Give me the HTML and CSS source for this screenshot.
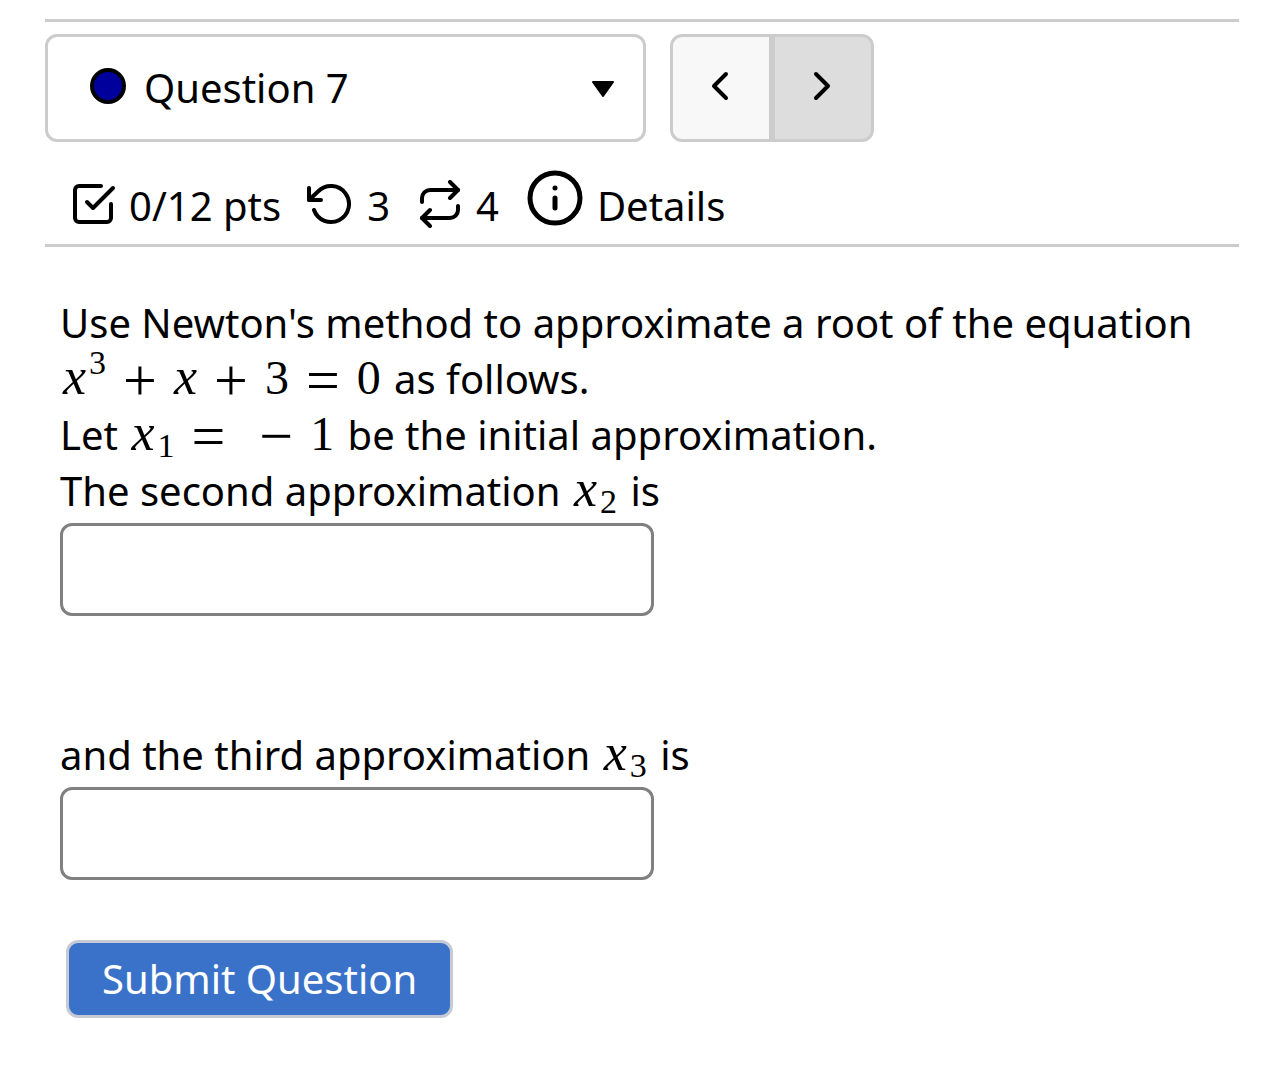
FILE: index.html
```
<!DOCTYPE html>
<html lang="en">
<head>
    <meta charset="UTF-8">
    <meta name="viewport" content="width=device-width, initial-scale=1.0">
    <title>Question 7</title>
    <link rel="stylesheet" href="styles.css">
</head>
<body>
    <main class="assessment">
        <header class="question-header">
            <div class="nav-row">
                <div class="question-select">
                    <svg class="status-dot" viewBox="0 0 36 36" aria-hidden="true"><circle cx="18" cy="18" r="16"/></svg>
                    <select aria-label="Question">
                        <option>Question 7</option>
                    </select>
                    <svg class="caret" viewBox="0 0 22 16" aria-hidden="true"><path d="M1 1h20L11 15z"/></svg>
                </div>
                <div class="pager">
                    <button type="button" class="prev" aria-label="Previous question">
                        <svg class="icon chevron" viewBox="0 0 24 24"><path d="M15 18l-6-6 6-6"/></svg>
                    </button>
                    <button type="button" class="next" aria-label="Next question">
                        <svg class="icon chevron" viewBox="0 0 24 24"><path d="M9 18l6-6-6-6"/></svg>
                    </button>
                </div>
            </div>
            <div class="info-row">
                <span class="info-item">
                    <svg class="icon" viewBox="0 0 24 24"><path d="M9 11l3 3L22 4"/><path d="M21 12v7a2 2 0 0 1-2 2H5a2 2 0 0 1-2-2V5a2 2 0 0 1 2-2h11"/></svg>
                    0/12 pts
                </span>
                <span class="info-item">
                    <svg class="icon" viewBox="0 0 24 24"><path d="M1 4v6h6"/><path d="M3.51 15a9 9 0 1 0 2.13-9.36L1 10"/></svg>
                    3
                </span>
                <span class="info-item">
                    <svg class="icon" viewBox="0 0 24 24"><path d="M17 1l4 4-4 4"/><path d="M3 11V9a4 4 0 0 1 4-4h14"/><path d="M7 23l-4-4 4-4"/><path d="M21 13v2a4 4 0 0 1-4 4H3"/></svg>
                    4
                </span>
                <button type="button" class="info-item details">
                    <svg class="icon large" viewBox="0 0 24 24"><circle cx="12" cy="12" r="10"/><path d="M12 16v-4M12 8h.01"/></svg>
                    Details
                </button>
            </div>
        </header>

        <form class="question">
            <p>Use Newton's method to approximate a root of the equation
                <span class="math"><i>x</i><sup>3</sup> <b>+</b> <i>x</i> <b>+</b> 3 <b>=</b> 0</span> as follows.</p>
            <p>Let <span class="math"><i>x</i><sub>1</sub> <b>=</b> &nbsp;<b>−</b> 1</span> be the initial approximation.</p>
            <label for="second">The second approximation <span class="math"><i>x</i><sub>2</sub></span> is</label>
            <input type="text" id="second" autocomplete="off">
            <label for="third">and the third approximation <span class="math"><i>x</i><sub>3</sub></span> is</label>
            <input type="text" id="third" autocomplete="off">
            <button type="button" class="submit">Submit Question</button>
        </form>
    </main>
</body>
</html>
```
FILE: styles.css
```
* {
    margin: 0;
    padding: 0;
    box-sizing: border-box;
}

body {
    font-family: "Trebuchet MS", "Noto Sans", sans-serif;
    font-size: 40px;
    line-height: 56px;
    color: #000;
    background: #fff;
}

button,
select,
input {
    font: inherit;
    color: inherit;
}

.assessment {
    padding: 19px 45px 40px;
}

.question-header {
    border-top: 3px solid #ccc;
    border-bottom: 3px solid #ccc;
    padding-top: 12px;
}

.nav-row {
    display: flex;
    gap: 24px;
}

.question-select {
    position: relative;
    flex: 0 1 601px;
}

.question-select select {
    appearance: none;
    width: 100%;
    height: 108px;
    padding: 0 80px 0 96px;
    border: 3px solid #ccc;
    border-radius: 12px;
    background: #fff;
}

.status-dot {
    position: absolute;
    left: 45px;
    top: 34px;
    width: 36px;
    height: 36px;
    fill: #00009c;
    stroke: #000;
    stroke-width: 4;
}

.caret {
    position: absolute;
    right: 32px;
    top: 47px;
    width: 22px;
    height: 16px;
    stroke: #000;
    stroke-width: 2;
    stroke-linejoin: round;
    pointer-events: none;
}

.pager {
    display: flex;
}

.pager button {
    display: flex;
    align-items: center;
    justify-content: center;
    width: 102px;
    height: 108px;
    padding: 0 2px 4px 0;
    border: 3px solid #ccc;
}

.pager .prev {
    background: #f8f8f8;
    border-radius: 12px 0 0 12px;
}

.pager .next {
    background: #ddd;
    border-radius: 0 12px 12px 0;
}

.icon {
    flex: none;
    width: 48px;
    height: 48px;
    margin-bottom: 4px;
    fill: none;
    stroke: #000;
    stroke-width: 2;
    stroke-linecap: round;
    stroke-linejoin: round;
}

.icon.chevron {
    margin: 0;
}

.icon.large {
    width: 60px;
    height: 60px;
    margin-bottom: 16px;
}

.info-row {
    display: flex;
    align-items: center;
    gap: 26px;
    padding: 26px 24px 0;
}

.info-item {
    display: flex;
    align-items: center;
    gap: 12px;
}

.details {
    border: 0;
    background: none;
}

.question {
    padding: 48px 15px 0;
}

.question label {
    display: block;
}

.math {
    margin: 0 3px;
    font-family: "Liberation Serif", serif;
    font-size: 48px;
    line-height: 40px;
    white-space: nowrap;
}

.math i {
    font-size: 52px;
    line-height: 0;
}

/* operators are set larger than the digits */
.math b {
    margin: 0 5px;
    font-size: 60px;
    font-weight: 400;
    line-height: 0;
    vertical-align: -6px;
}

.math sup,
.math sub {
    margin-left: 3px;
    font-size: 34px;
    line-height: 0;
}

.math sup {
    vertical-align: 20px;
}

.math sub {
    vertical-align: -7px;
}

.question input {
    display: block;
    width: 594px;
    max-width: 100%;
    height: 93px;
    margin: 4px 0 111px;
    padding: 0 16px;
    border: 3px solid #808080;
    border-radius: 12px;
}

.question input:last-of-type {
    margin-bottom: 60px;
}

.submit {
    margin-left: 6px;
    padding: 8px 33px;
    border: 3px solid #c5cad4;
    border-radius: 12px;
    background: #3a72c9;
    color: #fff;
}
```
